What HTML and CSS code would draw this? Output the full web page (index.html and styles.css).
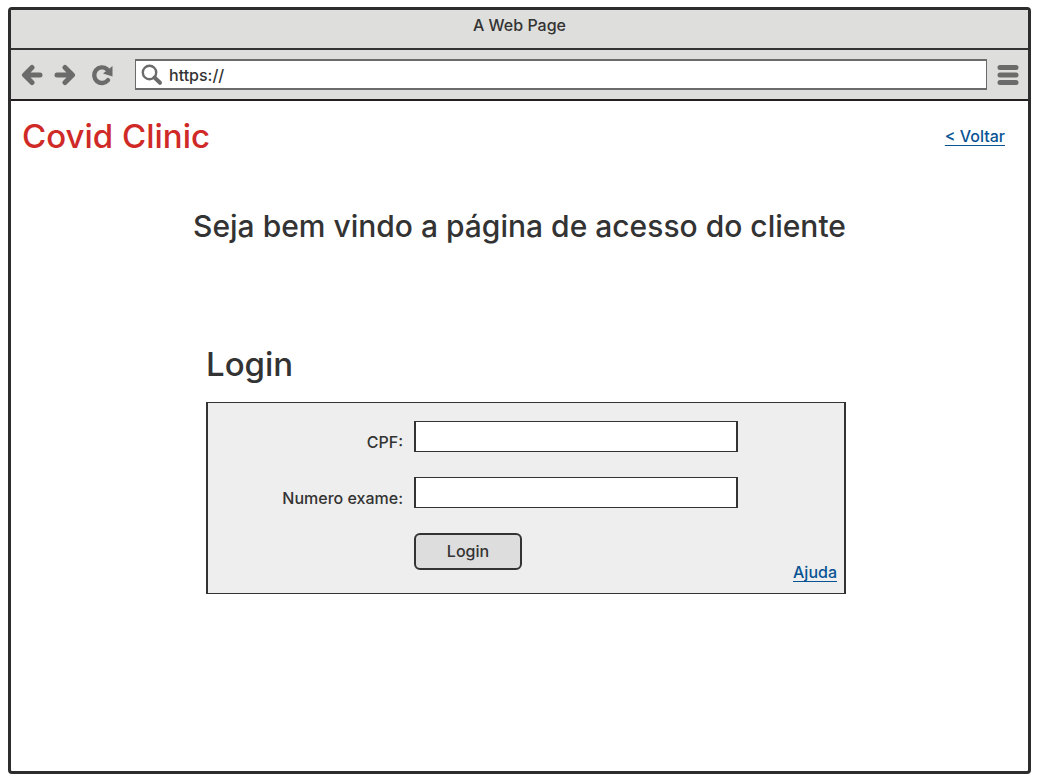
FILE: index.html
```html
<!DOCTYPE html>
<html lang="pt-BR">
<head>
<meta charset="utf-8">
<title>Covid Clinic</title>
<link rel="stylesheet" href="styles.css">
</head>
<body>
<div class="browser">
  <div class="titlebar">A Web Page</div>
  <div class="toolbar">
    <button class="tool back" type="button" aria-label="Back">
      <svg class="icon" viewBox="0 0 22 22"><path d="M19 11H5M11 3.5L3.5 11L11 18.5" fill="none" stroke="currentColor" stroke-width="5" stroke-linecap="round" stroke-linejoin="round"/></svg>
    </button>
    <button class="tool forward" type="button" aria-label="Forward">
      <svg class="icon" viewBox="0 0 22 22"><path d="M3 11H17M11 3.5L18.5 11L11 18.5" fill="none" stroke="currentColor" stroke-width="5" stroke-linecap="round" stroke-linejoin="round"/></svg>
    </button>
    <button class="tool reload" type="button" aria-label="Reload">
      <svg class="icon" viewBox="0 0 22 22"><path d="M16 5.2A7.8 7.8 0 1 0 17 16.2" fill="none" stroke="currentColor" stroke-width="4.4" stroke-linecap="round"/><path d="M21.5 2V12.5L12 9.5Z" fill="currentColor"/></svg>
    </button>
    <label class="address">
      <svg class="icon" viewBox="0 0 22 22"><circle cx="8.5" cy="8.5" r="6.7" fill="none" stroke="currentColor" stroke-width="2.4"/><path d="M13.5 13.5L19 18.8" fill="none" stroke="currentColor" stroke-width="4" stroke-linecap="round"/></svg>
      <input class="url" type="text" value="https://" aria-label="Address">
    </label>
    <button class="tool menu" type="button" aria-label="Menu">
      <svg class="icon" viewBox="0 0 22 22"><path d="M3 3.5H19M3 11H19M3 18.5H19" fill="none" stroke="currentColor" stroke-width="5" stroke-linecap="round"/></svg>
    </button>
  </div>
  <div class="page">
    <header class="header">
      <h1 class="brand">Covid Clinic</h1>
      <a class="link" href="#voltar">&lt; Voltar</a>
    </header>
    <main class="main">
      <p class="welcome">Seja bem vindo a página de acesso do cliente</p>
      <section class="login">
        <h2 class="heading">Login</h2>
        <form class="panel">
          <label class="label" for="cpf">CPF:</label>
          <input class="field" id="cpf" type="text">
          <label class="label" for="exame">Numero exame:</label>
          <input class="field" id="exame" type="text">
          <button class="submit" type="button">Login</button>
          <a class="link help" href="#ajuda">Ajuda</a>
        </form>
      </section>
    </main>
  </div>
</div>
</body>
</html>
```
FILE: styles.css
```css
* {
  box-sizing: border-box;
}

body {
  margin: 0;
  padding: 7px 6px 6px 8px;
  background: #fff;
  color: #333;
  font: 500 16px/20px Inter, "Liberation Sans", sans-serif;
}

button,
input {
  font: inherit;
  color: inherit;
}

.browser {
  min-height: calc(100vh - 13px);
  border: 3px solid #2d2d2e;
  border-radius: 4px;
}

.titlebar {
  padding: 5px 0 13px;
  background: #dededc;
  border-bottom: 2px solid #333;
  text-align: center;
}

.toolbar {
  display: flex;
  align-items: center;
  padding: 9px 9px 9px 10px;
  background: #dededc;
  border-bottom: 2px solid #231f20;
}

.tool {
  display: flex;
  padding: 0;
  border: 0;
  background: none;
  color: #6b6b6b;
}

.icon {
  display: block;
  flex: none;
  width: 22px;
  height: 22px;
  color: #6b6b6b;
}

.forward {
  margin-left: 11px;
}

.reload {
  margin: 0 22px 0 15px;
}

.menu {
  margin-left: 10px;
}

.address {
  display: flex;
  flex: 1;
  align-items: center;
  gap: 6px;
  height: 31px;
  padding-left: 5px;
  background: #fff;
  border: 2px solid #6b6b6b;
  border-width: 2px 1px;
}

.url {
  flex: 1;
  min-width: 0;
  padding: 0;
  border: 0;
  outline: 0;
  background: none;
}

.page {
  padding: 13px 11px 24px;
}

.header {
  display: flex;
  align-items: center;
  justify-content: space-between;
  padding-right: 12px;
}

.brand {
  margin: 0;
  color: #cf2a27;
  font-size: 33px;
  font-weight: 500;
  line-height: 44px;
}

.link {
  color: #085394;
  text-underline-offset: 3px;
}

.main {
  max-width: 653px;
  margin: 48px auto 0;
}

.welcome {
  margin: 0;
  font-size: 30px;
  line-height: 40px;
  text-align: center;
}

.login {
  padding-left: 13px;
}

.heading {
  margin: 96px 0 16px;
  font-size: 33px;
  font-weight: 500;
  line-height: 44px;
}

.panel {
  display: grid;
  grid-template-columns: 195px minmax(0, 324px) 1fr;
  column-gap: 11px;
  row-gap: 25px;
  padding: 18px 7px 11px 0;
  background: #eee;
  border: 2px solid #333;
  border-width: 1px 2px;
}

.label {
  grid-column: 1;
  align-self: end;
  text-align: right;
}

.field {
  grid-column: 2;
  width: 100%;
  height: 31px;
  padding: 0 8px;
  background: #fff;
  border: 2px solid #333;
  border-width: 1px 2px;
  border-radius: 0;
}

.submit {
  grid-column: 2;
  width: 108px;
  height: 37px;
  margin-bottom: 12px;
  padding: 0 0 2px;
  background: #ddd;
  border: 2px solid #333;
  border-radius: 6px;
}

.help {
  grid-column: 3;
  align-self: end;
  justify-self: end;
}
```
